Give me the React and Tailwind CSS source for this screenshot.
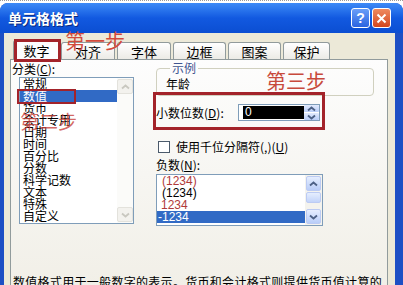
import React from 'react';

const categories = ['常规', '数值', '货币', '会计专用', '日期', '时间', '百分比', '分数', '科学记数', '文本', '特殊', '自定义'];

const negatives = [
  { text: '(1234)', color: 'text-[#b03a3a]', pad: 'pl-[5px]' },
  { text: '(1234)', color: 'text-black', pad: 'pl-[5px]' },
  { text: '1234', color: 'text-[#b03a3a]', pad: 'pl-[4px]' },
  { text: '-1234', color: 'text-white', pad: 'pl-[1px]', selected: true },
];

const Chevron = ({ down, color = '#4d6185' }) => (
  <svg width="9" height="6" viewBox="0 0 9 6">
    <path
      d={down ? 'M1 1.5 L4.5 4.5 L8 1.5' : 'M1 4.5 L4.5 1.5 L8 4.5'}
      fill="none"
      stroke={color}
      strokeWidth="1.8"
    />
  </svg>
);

const Tab = ({ label, className = '' }) => (
  <div
    className={`h-[17px] flex items-center justify-center border border-b-0 border-[#919b9c] rounded-t-[3px] bg-gradient-to-b from-white to-[#ecebe6] text-[13px] leading-none ${className}`}
  >
    {label}
  </div>
);

export default function App() {
  return (
    <div className="relative w-[403px] h-[285px] overflow-hidden bg-white font-['Noto_Sans_CJK_SC',sans-serif] text-[12px] text-black">
      {/* strip above the window */}
      <div className="h-[3px] border-t border-dotted border-[#9a9a9a]" />

      {/* --- WINDOW --- */}
      <div className="flex flex-col h-[282px] rounded-t-[8px] bg-[#1d4fc4]">
        {/* title bar */}
        <div className="h-[30px] shrink-0 flex items-center justify-between pl-[8px] pr-[12px] rounded-t-[8px] bg-gradient-to-b from-[#3d8af7] via-[#1259e0] to-[#0b4ed2]">
          <span className="text-white font-bold text-[14px] leading-none [text-shadow:1px_1px_0_#0a2a80]">单元格格式</span>
          <div className="flex gap-[2px]">
            <div className="w-[19px] h-[20px] rounded-[3px] border border-white bg-gradient-to-b from-[#6a9ef8] to-[#2a63e0] flex items-center justify-center text-white font-bold text-[14px] leading-none font-['Liberation_Sans',sans-serif]">
              ?
            </div>
            <div className="w-[19px] h-[20px] rounded-[3px] border border-white bg-gradient-to-b from-[#ef8a5f] to-[#d2451c] flex items-center justify-center">
              <svg width="11" height="11" viewBox="0 0 11 11">
                <path d="M1.5 1.5 L9.5 9.5 M9.5 1.5 L1.5 9.5" stroke="white" strokeWidth="2" />
              </svg>
            </div>
          </div>
        </div>

        {/* dialog body */}
        <div className="flex-1 flex flex-col ml-[4px] mr-[8px] bg-[#ece9d8] pl-[6px] pr-[7px] pt-[7px] overflow-hidden">
          {/* tabs */}
          <div className="flex items-end pl-[3px] relative z-10">
            <div className="w-[47px] h-[20px] -mb-[1px] flex items-center justify-center border border-b-0 border-[#919b9c] rounded-t-[3px] bg-[#fcfcfe] text-[13px] leading-none">
              数字
            </div>
            <Tab label="对齐" className="w-[54px] ml-[1px]" />
            <Tab label="字体" className="w-[54px] ml-[2px]" />
            <Tab label="边框" className="w-[53px] ml-[2px]" />
            <Tab label="图案" className="w-[53px] ml-[2px]" />
            <Tab label="保护" className="w-[47px] ml-[2px]" />
          </div>

          {/* tab panel */}
          <div className="flex-1 flex flex-col border border-[#919b9c] bg-gradient-to-b from-[#fdfdfd] to-[#f1efe7]">
            <div className="flex">
              {/* left column */}
              <div className="w-[145px] shrink-0 pt-[3px] pl-[1px]">
                <div className="leading-[12px]">分类(<u>C</u>):</div>
                <div className="mt-[2px] ml-[7px] w-[115px] h-[147px] border border-[#7f9db9] bg-white flex">
                  <div className="w-[97px]">
                    {categories.map((c) => (
                      <div
                        key={c}
                        className={`h-[12px] leading-[12px] pl-[3px] ${c === '数值' ? 'bg-[#316ac5] text-white' : ''}`}
                      >
                        {c}
                      </div>
                    ))}
                  </div>
                  <div className="w-[16px] flex flex-col justify-between bg-[#fbfbf9] pt-[1px] pb-[1px]">
                    <div className="h-[15px] rounded-[2px] border border-[#e3e2dc] bg-[#f3f2ee] flex items-center justify-center">
                      <Chevron color="#c9c8c0" />
                    </div>
                    <div className="h-[15px] rounded-[2px] border border-[#e3e2dc] bg-[#f3f2ee] flex items-center justify-center">
                      <Chevron down color="#c9c8c0" />
                    </div>
                  </div>
                </div>
              </div>

              {/* right column */}
              <div className="w-[220px] shrink-0">
                <fieldset className="mt-[2px] h-[34px] w-[218px] border border-[#d0d0bf] rounded-[4px] pl-[9px]">
                  <legend className="ml-[4px] px-[2px] text-[12px] leading-[12px] text-[#3f5590]">示例</legend>
                  <div className="leading-[12px] mt-[4px]">年龄</div>
                </fieldset>

                <div className="flex items-center mt-[8px] h-[17px]">
                  <span className="w-[82px] leading-[12px]">小数位数(<u>D</u>):</span>
                  <div className="w-[82px] h-[17px] border border-[#7f9db9] bg-white flex items-center pl-[4px]">
                    <div className="w-[62px] h-[13px] bg-black text-white leading-[13px] pl-[2px] font-['Liberation_Sans',sans-serif] text-[12px]">
                      0
                    </div>
                    <div className="ml-auto w-[15px] h-[15px] flex flex-col gap-[1px]">
                      <div className="flex-1 rounded-[1px] bg-gradient-to-b from-[#e2eafd] to-[#b9cdf8] flex items-center justify-center">
                        <Chevron />
                      </div>
                      <div className="flex-1 rounded-[1px] bg-gradient-to-b from-[#e2eafd] to-[#b9cdf8] flex items-center justify-center">
                        <Chevron down />
                      </div>
                    </div>
                  </div>
                </div>

                <div className="flex items-center mt-[19px] h-[13px]">
                  <div className="w-[12px] h-[12px] ml-[2px] border border-[#4b5a6b] bg-white" />
                  <span className="ml-[6px] leading-[12px]">使用千位分隔符(,)(<u>U</u>)</span>
                </div>

                <div className="mt-[6px] leading-[12px]">负数(<u>N</u>):</div>

                <div className="mt-[3px] w-[167px] h-[52px] border border-[#7f9db9] bg-white flex">
                  <div className="w-[148px] font-['Liberation_Sans',sans-serif] text-[12px]">
                    {negatives.map((n, i) => (
                      <div
                        key={i}
                        className={`h-[12px] leading-[12px] ${n.pad} ${n.color} ${n.selected ? 'bg-[#316ac5]' : ''}`}
                      >
                        {n.text}
                      </div>
                    ))}
                  </div>
                  <div className="w-[17px] flex flex-col bg-[#f4f3ee] p-[1px]">
                    <div className="h-[15px] rounded-[2px] border border-[#bccbf3] bg-gradient-to-b from-[#e6eefe] to-[#b9cdf8] flex items-center justify-center">
                      <Chevron />
                    </div>
                    <div className="h-[11px] mt-[1px] rounded-[2px] border border-[#bccbf3] bg-gradient-to-b from-[#e6eefe] to-[#c3d4fa]" />
                    <div className="flex-1" />
                    <div className="h-[15px] rounded-[2px] border border-[#bccbf3] bg-gradient-to-b from-[#e6eefe] to-[#b9cdf8] flex items-center justify-center">
                      <Chevron down />
                    </div>
                  </div>
                </div>
              </div>
            </div>

            <p className="mt-[49px] pl-[2px] text-[12px] leading-[13px] tracking-[0.3px] whitespace-nowrap">
              数值格式用于一般数字的表示。货币和会计格式则提供货币值计算的
            </p>
          </div>
        </div>
      </div>

      {/* --- ANNOTATIONS --- */}
      <div className="absolute z-20 left-[14px] top-[39px] w-[47px] h-[23px] border-[3px] border-[#a3232a]" />
      <div className="absolute z-20 left-[65px] top-[31px] text-[20px] leading-none text-[#d24a3c]">第一步</div>

      <div className="absolute z-20 left-[17px] top-[89px] w-[59px] h-[15px] border-[2px] border-[#a3232a]" />
      <div className="absolute z-20 left-[20px] top-[111px] text-[19px] leading-none text-[#c9403a]/80">第二步</div>

      <div className="absolute z-20 left-[266px] top-[71px] text-[20px] leading-none text-[#c84a3c]">第三步</div>
      <div className="absolute z-20 left-[153px] top-[92px] w-[172px] h-[38px] border-[3px] border-[#a3232a]" />
    </div>
  );
}
